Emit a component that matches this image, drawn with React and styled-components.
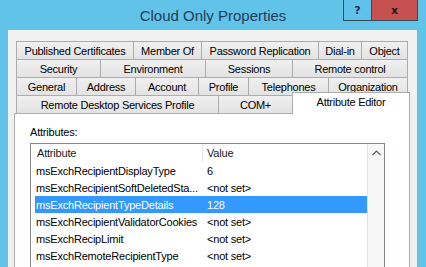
import React from "react";
import styled, { createGlobalStyle } from "styled-components";

const FRAME = "#62c3e9";

const GlobalStyle = createGlobalStyle`
  html, body {
    margin: 0;
    padding: 0;
    width: 426px;
    height: 267px;
    overflow: hidden;
    background: ${FRAME};
  }
  * { box-sizing: border-box; }
`;

const Frame = styled.div`
  display: flex;
  flex-direction: column;
  width: 426px;
  height: 267px;
  overflow: hidden;
  background: ${FRAME};
  font-family: "Liberation Sans", Arial, sans-serif;
`;

const TitleBar = styled.div`
  display: grid;
  grid-template-columns: 1fr auto 1fr;
  height: 30px;
  flex: none;
`;

const Title = styled.div`
  grid-column: 2;
  align-self: center;
  font-size: 15px;
  line-height: 18px;
  padding-top: 2px;
  color: #1f3c58;
  white-space: nowrap;
`;

const Controls = styled.div`
  grid-column: 3;
  justify-self: end;
  align-self: start;
  display: flex;
  margin-right: 8px;
`;

const CaptionButton = styled.div`
  width: ${(p) => p.$w}px;
  height: 21px;
  display: flex;
  align-items: center;
  justify-content: center;
  background: ${(p) => p.$bg};
  border: 1px solid #34495a;
  border-top: none;
  margin-left: -1px;
  font-weight: bold;
  font-size: ${(p) => p.$fs}px;
  color: ${(p) => p.$color};
  font-family: "DejaVu Sans", "Liberation Sans", sans-serif;
`;

const Client = styled.div`
  flex: 1;
  margin: 0 9px 0 8px;
  background: #f0f0f0;
  padding: 11px 7px 0 6px;
  display: flex;
  flex-direction: column;
  min-height: 0;
`;

const TabStrip = styled.div`
  display: flex;
  flex-direction: column;
  margin: 0 2px;
`;

const TabRow = styled.div`
  display: flex;
  height: 18px;
`;

const Tab = styled.div`
  width: ${(p) => p.$w}px;
  height: 18px;
  flex: none;
  display: flex;
  align-items: center;
  justify-content: center;
  border-top: 1px solid #acacac;
  border-left: 1px solid #acacac;
  background: linear-gradient(#f0f0f0, #e3e3e3);
  font-size: 11px;
  letter-spacing: -0.25px;
  color: #000;
  white-space: nowrap;
  &:last-child {
    border-right: 1px solid #acacac;
  }
`;

const ActiveTab = styled.div`
  position: relative;
  z-index: 2;
  width: ${(p) => p.$w}px;
  height: 22px;
  flex: none;
  margin: -3px -2px 0 0;
  display: flex;
  justify-content: center;
  padding-top: 3px;
  background: #fff;
  border: 1px solid #acacac;
  border-bottom: none;
  font-size: 11px;
  letter-spacing: -0.25px;
  color: #000;
  white-space: nowrap;
`;

const Panel = styled.div`
  flex: 1;
  min-height: 0;
  background: #fff;
  border: 1px solid #acacac;
  border-bottom: none;
  padding: 11px 0 0 15px;
  display: flex;
  flex-direction: column;
`;

const Label = styled.div`
  font-size: 11px;
  line-height: 14px;
  letter-spacing: -0.2px;
  color: #000;
  margin-bottom: 4px;
`;

const ListBox = styled.div`
  width: 355px;
  flex: 1;
  min-height: 0;
  border: 1px solid #828790;
  border-bottom: none;
  display: grid;
  grid-template-columns: 1fr 17px;
  background: #fff;
  overflow: hidden;
`;

const ListMain = styled.div`
  display: flex;
  flex-direction: column;
`;

const HeaderRow = styled.div`
  display: grid;
  grid-template-columns: 172px 1fr;
  height: 18px;
  align-items: center;
`;

const HeaderCell = styled.div`
  height: 18px;
  line-height: 18px;
  padding-left: ${(p) => p.$pad}px;
  font-size: 11px;
  letter-spacing: -0.2px;
  color: #1a1a1a;
  border-right: ${(p) => (p.$divider ? "1px solid #e5e5e5" : "none")};
  white-space: nowrap;
`;

const Row = styled.div`
  display: grid;
  grid-template-columns: 168px 1fr;
  height: 17px;
  margin-left: 4px;
  align-items: center;
  background: ${(p) => (p.$selected ? "#3399ff" : "transparent")};
  color: ${(p) => (p.$selected ? "#fff" : "#000")};
  font-size: 11px;
  letter-spacing: -0.2px;
  white-space: nowrap;
`;

const Cell = styled.div`
  padding-left: ${(p) => p.$pad}px;
  overflow: hidden;
`;

const ScrollBar = styled.div`
  border-left: 1px solid #e0e0e0;
  background: #f7f7f7;
  display: flex;
  flex-direction: column;
`;

const ScrollButton = styled.div`
  height: 18px;
  display: flex;
  align-items: center;
  justify-content: center;
`;

const tabRows = [
  [
    ["Published Certificates", 117],
    ["Member Of", 68],
    ["Password Replication", 117],
    ["Dial-in", 43],
    ["Object", 47],
  ],
  [
    ["Security", 84],
    ["Environment", 105],
    ["Sessions", 87],
    ["Remote control", 116],
  ],
  [
    ["General", 60],
    ["Address", 59],
    ["Account", 63],
    ["Profile", 50],
    ["Telephones", 80],
    ["Organization", 80],
  ],
];

const rows = [
  ["msExchRecipientDisplayType", "6"],
  ["msExchRecipientSoftDeletedSta...", "<not set>"],
  ["msExchRecipientTypeDetails", "128", true],
  ["msExchRecipientValidatorCookies", "<not set>"],
  ["msExchRecipLimit", "<not set>"],
  ["msExchRemoteRecipientType", "<not set>"],
];

export default function App() {
  return (
    <>
      <GlobalStyle />
      <Frame>
        <TitleBar>
          <Title>Cloud Only Properties</Title>
          <Controls>
            <CaptionButton $w={29} $bg="#5fc2ea" $fs={11} $color="#1b2f4a">
              ?
            </CaptionButton>
            <CaptionButton $w={47} $bg="#c75050" $fs={11} $color="#1a1a1a">
              x
            </CaptionButton>
          </Controls>
        </TitleBar>
        <Client>
          <TabStrip>
            {tabRows.map((r, i) => (
              <TabRow key={i}>
                {r.map(([t, w]) => (
                  <Tab key={t} $w={w}>
                    {t}
                  </Tab>
                ))}
              </TabRow>
            ))}
            <TabRow>
              <Tab $w={202}>Remote Desktop Services Profile</Tab>
              <Tab $w={74}>COM+</Tab>
              <ActiveTab $w={118}>Attribute Editor</ActiveTab>
            </TabRow>
          </TabStrip>
          <Panel>
            <Label>Attributes:</Label>
            <ListBox>
              <ListMain>
                <HeaderRow>
                  <HeaderCell $pad={6} $divider>
                    Attribute
                  </HeaderCell>
                  <HeaderCell $pad={4}>Value</HeaderCell>
                </HeaderRow>
                {rows.map(([a, v, sel]) => (
                  <Row key={a} $selected={sel}>
                    <Cell $pad={1}>{a}</Cell>
                    <Cell $pad={4}>{v}</Cell>
                  </Row>
                ))}
              </ListMain>
              <ScrollBar>
                <ScrollButton>
                  <svg width="9" height="6" viewBox="0 0 9 6">
                    <path d="M0.5 5 L4.5 1 L8.5 5" fill="none" stroke="#606060" strokeWidth="1.2" />
                  </svg>
                </ScrollButton>
              </ScrollBar>
            </ListBox>
          </Panel>
        </Client>
      </Frame>
    </>
  );
}
